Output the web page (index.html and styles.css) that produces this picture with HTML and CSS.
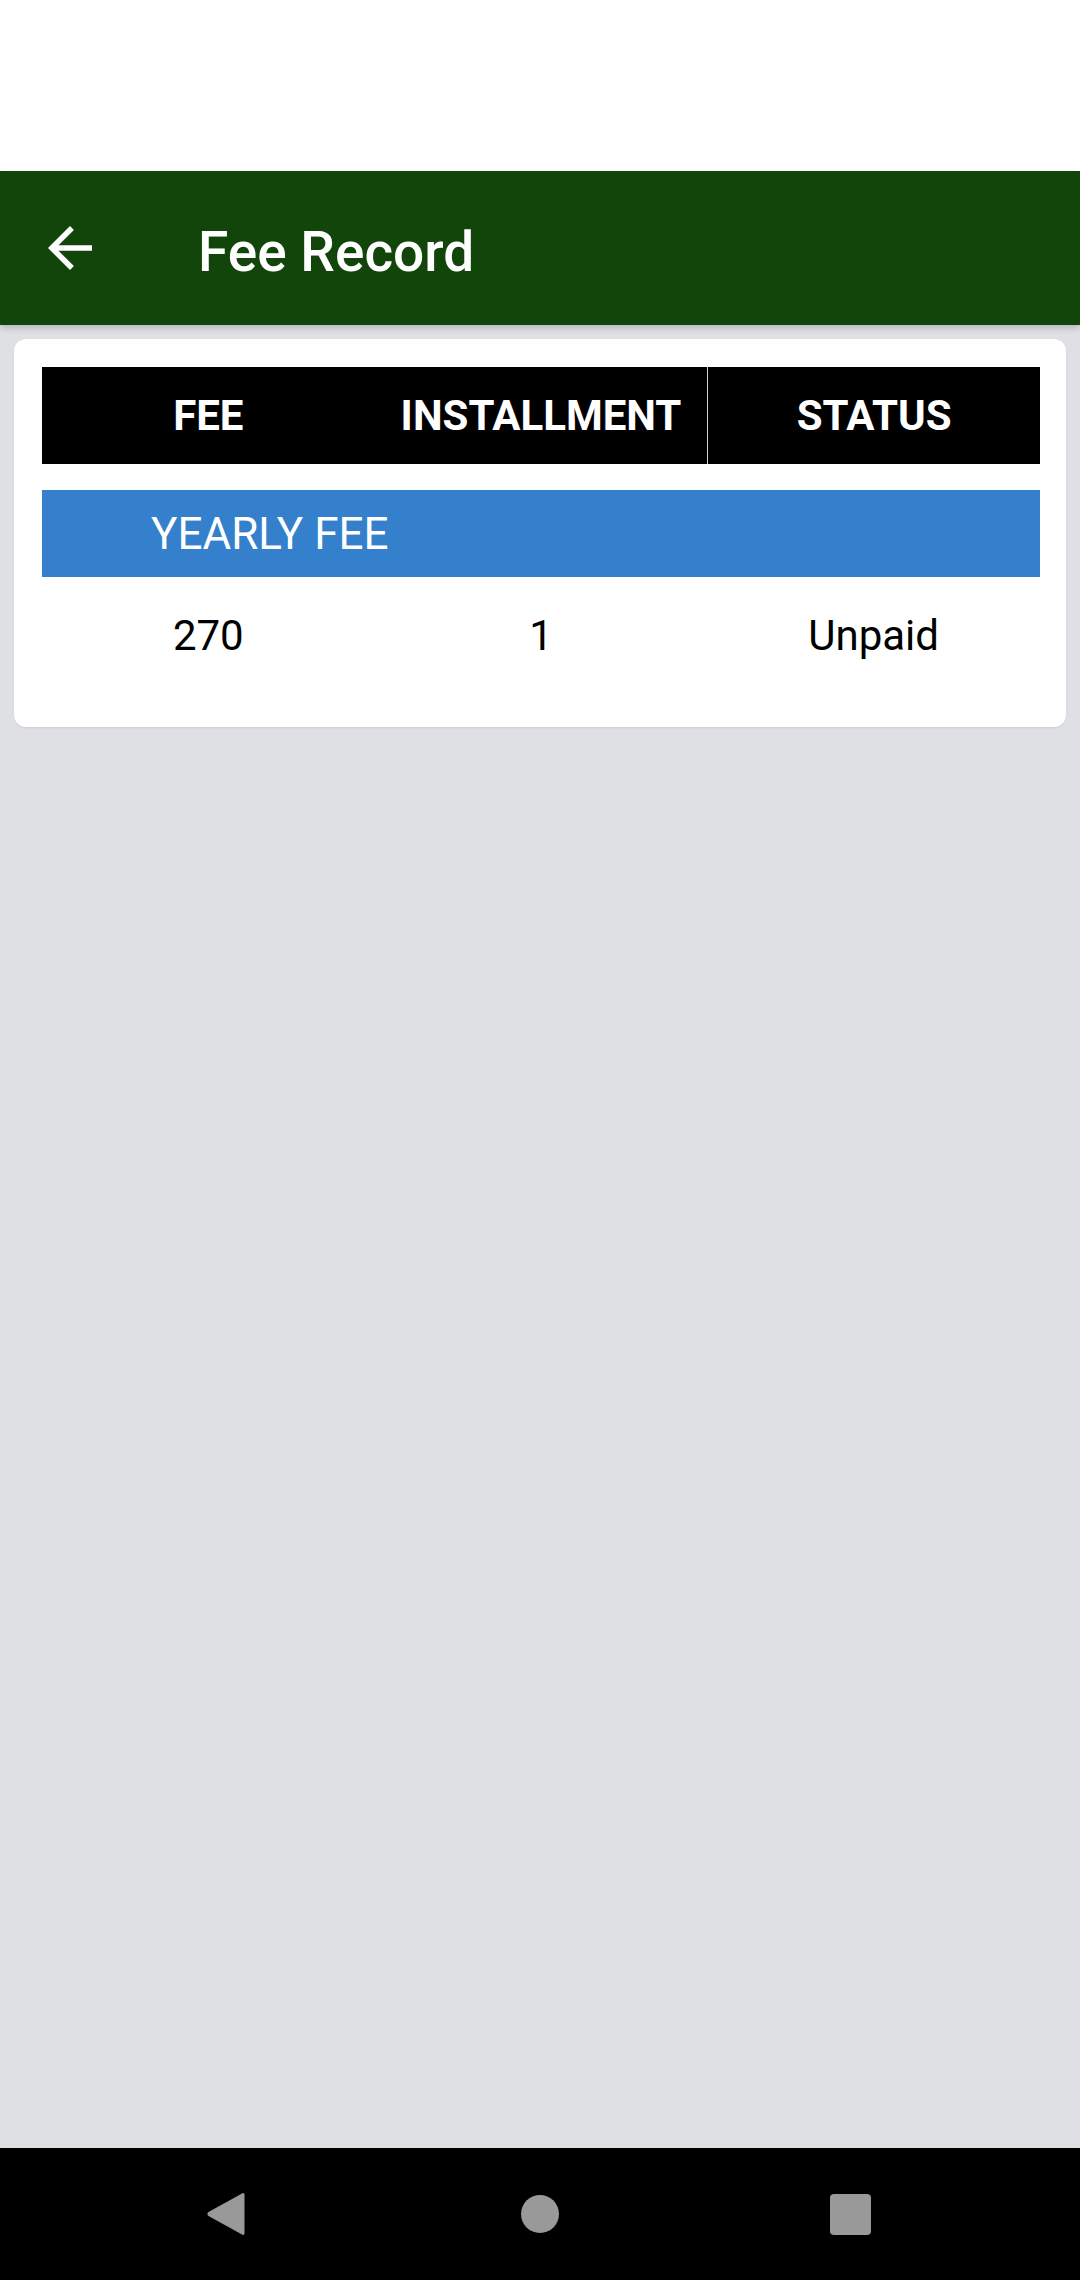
FILE: index.html
```html
<!DOCTYPE html>
<html lang="en">
<head>
    <meta charset="UTF-8">
    <title>Fee Record</title>
    <meta name="viewport" content="width=device-width, initial-scale=1.0">
    <link rel="stylesheet" href="styles.css">
</head>
<body>
    <div class="screen">
        <!-- Status bar area -->
        <div class="status-bar"></div>

        <!-- Toolbar -->
        <header class="app-bar">
            <span class="back-btn">
                <svg viewBox="0 0 24 24" width="66" height="66">
                    <path d="M20 11H7.83l5.59-5.59L12 4l-8 8 8 8 1.41-1.41L7.83 13H20v-2z" fill="#fff"></path>
                </svg>
            </span>
            <h1 class="app-title">Fee Record</h1>
        </header>

        <!-- Content -->
        <main class="content">
            <div class="card">
                <div class="table-head">
                    <div class="cell">FEE</div>
                    <div class="cell">INSTALLMENT</div>
                    <div class="cell divider">STATUS</div>
                </div>
                <div class="group-row">YEARLY FEE</div>
                <div class="data-row">
                    <div class="cell">270</div>
                    <div class="cell">1</div>
                    <div class="cell">Unpaid</div>
                </div>
            </div>
        </main>

        <!-- System navigation -->
        <nav class="nav-bar">
            <svg class="nav-back" viewBox="0 0 38 44" width="38" height="44">
                <path d="M35 1.5 C36.5 0.5 37.5 1.5 37.5 3 V41 C37.5 42.5 36.5 43.5 35 42.5 L1.5 24 C0 23 0 21 1.5 20 Z" fill="#999"></path>
            </svg>
            <span class="nav-home"></span>
            <span class="nav-recent"></span>
        </nav>
    </div>
</body>
</html>
```

FILE: styles.css
```css
* {
    box-sizing: border-box;
}
body {
    margin: 0;
    font-family: Roboto, "Noto Sans", Arial, sans-serif;
    background-color: #dfe0e4;
}
.screen {
    width: 1080px;
    height: 2280px;
    display: flex;
    flex-direction: column;
}
.status-bar {
    height: 171px;
    background-color: #fff;
}
/* Toolbar */
.app-bar {
    height: 154px;
    background-color: #12450a;
    display: flex;
    align-items: center;
    padding-left: 37px;
    box-shadow: 0 3px 6px rgba(0, 0, 0, 0.18);
    position: relative;
    z-index: 1;
}
.back-btn {
    width: 66px;
    height: 66px;
    display: flex;
}
.app-title {
    margin: 8px 0 0 95px;
    color: #fff;
    font-size: 55px;
    font-weight: 500;
    line-height: 1.172;
}
/* Content */
.content {
    flex: 1;
    padding: 14px 14px;
}
.card {
    background-color: #fff;
    border-radius: 12px;
    padding: 28px 26px 28px 28px;
    box-shadow: 0 1px 2px rgba(0, 0, 0, 0.08);
}
.table-head,
.data-row {
    display: grid;
    grid-template-columns: 1fr 1fr 1fr;
}
.table-head {
    height: 97px;
    background-color: #000;
    color: #fff;
    font-size: 42px;
    font-weight: 700;
}
.table-head .cell {
    display: flex;
    align-items: center;
    justify-content: center;
}
.table-head .divider {
    border-left: 1px solid #d0d0d0;
}
.group-row {
    margin-top: 26px;
    height: 87px;
    display: flex;
    align-items: center;
    padding-left: 109px;
    background-color: #3480cd;
    color: #fff;
    font-size: 44px;
}
.data-row {
    padding: 34px 0 39px;
    font-size: 42px;
    color: #000;
    line-height: 1.172;
}
.data-row .cell {
    text-align: center;
}
/* System navigation */
.nav-bar {
    height: 132px;
    background-color: #000;
    position: relative;
}
.nav-back {
    position: absolute;
    left: 207px;
    top: 44px;
}
.nav-home {
    position: absolute;
    left: 521px;
    top: 47px;
    width: 38px;
    height: 38px;
    border-radius: 50%;
    background-color: #999;
}
.nav-recent {
    position: absolute;
    left: 830px;
    top: 46px;
    width: 41px;
    height: 41px;
    border-radius: 4px;
    background-color: #999;
}
```
